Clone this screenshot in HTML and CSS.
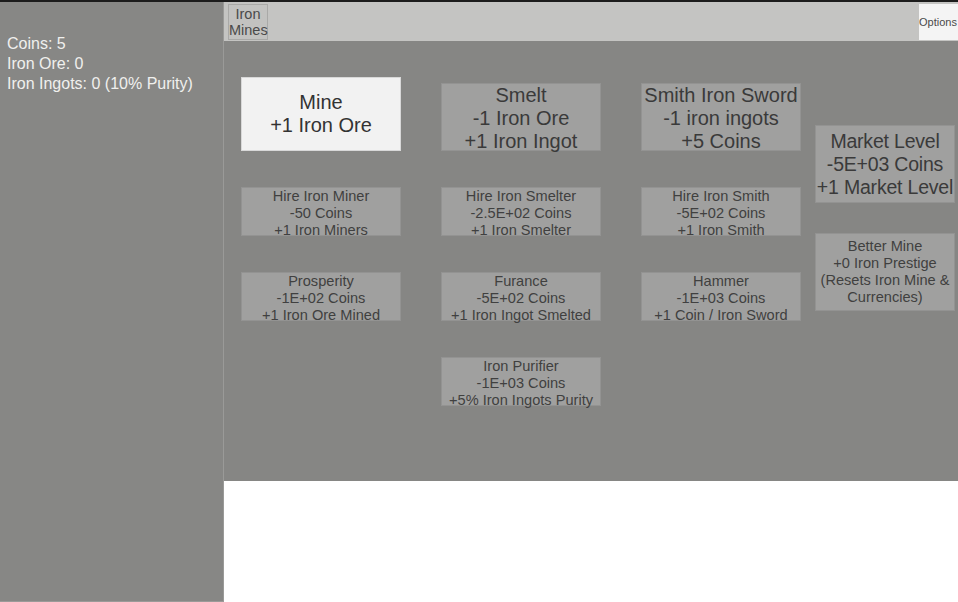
FILE: index.html
```html
<!DOCTYPE html>
<html lang="en">
<head>
    <meta charset="UTF-8">
    <meta name="viewport" content="width=device-width, initial-scale=1.0">
    <title>Iron Mines</title>
    <link rel="stylesheet" href="styles.css">
</head>
<body>
    <div class="app">
        <div class="sidebar">
            <div class="stat">Coins: 5</div>
            <div class="stat">Iron Ore: 0</div>
            <div class="stat">Iron Ingots: 0 (10% Purity)</div>
        </div>

        <div class="right">
            <div class="topbar">
                <button class="tab">Iron<br>Mines</button>
                <button class="options">Options</button>
            </div>

            <div class="main">
                <div class="grid">
                    <button class="btn big active">Mine<br>+1 Iron Ore</button>
                    <button class="btn big short">Smelt<br>-1 Iron Ore<br>+1 Iron Ingot</button>
                    <button class="btn big short">Smith Iron Sword<br>-1 iron ingots<br>+5 Coins</button>

                    <button class="btn small">Hire Iron Miner<br>-50 Coins<br>+1 Iron Miners</button>
                    <button class="btn small">Hire Iron Smelter<br>-2.5E+02 Coins<br>+1 Iron Smelter</button>
                    <button class="btn small">Hire Iron Smith<br>-5E+02 Coins<br>+1 Iron Smith</button>

                    <button class="btn small">Prosperity<br>-1E+02 Coins<br>+1 Iron Ore Mined</button>
                    <button class="btn small">Furance<br>-5E+02 Coins<br>+1 Iron Ingot Smelted</button>
                    <button class="btn small">Hammer<br>-1E+03 Coins<br>+1 Coin / Iron Sword</button>

                    <div></div>
                    <button class="btn small">Iron Purifier<br>-1E+03 Coins<br>+5% Iron Ingots Purity</button>
                </div>

                <div class="prestige">
                    <button class="btn big wide market">Market Level<br>-5E+03 Coins<br>+1 Market Level</button>
                    <button class="btn small wide tall">Better Mine<br>+0 Iron Prestige<br>(Resets Iron Mine &amp;<br>Currencies)</button>
                </div>
            </div>
        </div>
    </div>
</body>
</html>
```

FILE: styles.css
```css
body {
    margin: 0;
    background-color: #ffffff;
    font-family: "Liberation Sans", Arial, sans-serif;
}
.app {
    display: flex;
    height: 602px;
    border-top: 2px solid #1c1c1c;
    box-sizing: border-box;
}
.sidebar {
    width: 224px;
    height: 600px;
    box-sizing: border-box;
    background-color: #878785;
    border-right: 1px solid #9a9a98;
    border-bottom: 1px solid #9a9a98;
    padding: 32px 0 0 7px;
    color: #f0f0ee;
    font-size: 16px;
}
.stat {
    line-height: 20px;
}
.right {
    flex: 1;
    display: flex;
    flex-direction: column;
    overflow: hidden;
}
.topbar {
    height: 39px;
    background-color: #c4c4c2;
    display: flex;
    justify-content: space-between;
    align-items: flex-start;
    padding: 2px 0 0 4px;
    box-sizing: border-box;
}
button {
    font-family: inherit;
    margin: 0;
    padding: 0;
    cursor: pointer;
}
.tab {
    width: 40px;
    height: 36px;
    background-color: #c2c2c0;
    border: 1px solid #a9a9a7;
    color: #4a4a4a;
    font-size: 14.5px;
    line-height: 16px;
}
.options {
    width: 39px;
    height: 36px;
    background-color: #f4f4f4;
    border: none;
    color: #4a4a4a;
    font-size: 11px;
    white-space: nowrap;
    overflow: hidden;
    text-align: left;
    padding-left: 0;
}
.main {
    height: 440px;
    background-color: #868684;
    display: flex;
    align-items: flex-start;
    padding: 36px 0 0 17px;
    box-sizing: border-box;
}
.grid {
    display: grid;
    grid-template-columns: 160px 160px 160px;
    column-gap: 40px;
    row-gap: 36px;
    align-items: end;
}
.btn {
    width: 160px;
    background-color: #a0a09f;
    border: 1px solid #939392;
    color: #3a3a3a;
    text-align: center;
    box-sizing: border-box;
    white-space: nowrap;
    overflow: visible;
}
.big {
    height: 74px;
    font-size: 20px;
    line-height: 23px;
}
.big.short {
    height: 68px;
    padding-bottom: 2px;
}
.btn.active {
    background-color: #f2f2f2;
    border-color: #d8d8d8;
    color: #333333;
}
.small {
    height: 49px;
    font-size: 14.6px;
    line-height: 17px;
    padding-bottom: 2px;
    color: #404040;
}
.prestige {
    display: flex;
    flex-direction: column;
    gap: 30px;
    margin: 48px 0 0 14px;
}
.wide {
    width: 140px;
    height: 78px;
}
.market {
    font-size: 19.5px;
    letter-spacing: -0.2px;
}
.small.tall {
    height: 78px;
    padding-bottom: 0;
}
```
